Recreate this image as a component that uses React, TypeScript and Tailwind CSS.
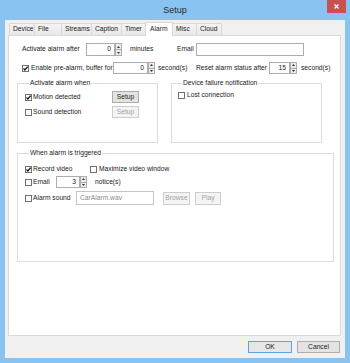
import React from 'react';

const font = "font-['Liberation_Sans',Arial,sans-serif]";

function Check({ checked = false }: { checked?: boolean }) {
  return (
    <span className="flex h-[7px] w-[7px] shrink-0 items-center justify-center border border-[#707070] bg-white">
      {checked && (
        <svg width="5" height="5" viewBox="0 0 5 5" className="shrink-0">
          <path d="M0.5 2.5 1.9 4 4.6 0.7" fill="none" stroke="#111" strokeWidth="1.2" />
        </svg>
      )}
    </span>
  );
}

function Tri({ up }: { up?: boolean }) {
  return (
    <svg width="3" height="2" viewBox="0 0 3 2">
      <path d={up ? 'M0 2 1.5 0 3 2Z' : 'M0 0 1.5 2 3 0Z'} fill="#333" />
    </svg>
  );
}

function Spin({ value, w }: { value: string; w: string }) {
  return (
    <div className="flex h-full shrink-0">
      <div className={`${w} flex h-full items-center justify-end border border-[#abadb3] bg-white pr-[3px]`}>
        {value}
      </div>
      <div className="flex h-full w-[7px] flex-col">
        <span className="flex flex-1 items-center justify-center border border-[#acacac] bg-[#ececec]">
          <Tri up />
        </span>
        <span className="-mt-px flex flex-1 items-center justify-center border border-[#acacac] bg-[#ececec]">
          <Tri />
        </span>
      </div>
    </div>
  );
}

function Btn({ label, w, disabled, primary }: { label: string; w: string; disabled?: boolean; primary?: boolean }) {
  const tone = disabled
    ? 'border-[#cccccc] bg-[#f4f4f4] text-[#a3a3a3]'
    : primary
      ? 'border-[#5fa2e0] bg-[#e6e6e6]'
      : 'border-[#adadad] bg-[#e3e3e3]';
  return (
    <div className={`${w} ${tone} flex h-full shrink-0 items-center justify-center border`}>{label}</div>
  );
}

const tabs = [
  { label: 'Device', w: 'w-[26px]' },
  { label: 'File', w: 'w-[27px]' },
  { label: 'Streams', w: 'w-[30px]' },
  { label: 'Caption', w: 'w-[30px]' },
  { label: 'Timer', w: 'w-[24px]' },
  { label: 'Alarm', w: 'w-[28px]', active: true },
  { label: 'Misc', w: 'w-[24px]' },
  { label: 'Cloud', w: 'w-[25px]' },
];

export default function App() {
  return (
    <div className={`${font} flex h-[363px] w-[350px] flex-col bg-[#88c3f2] text-[6.7px] leading-none text-[#1a1a1a]`}>
      {/* title bar */}
      <div className="relative flex h-[20px] shrink-0 items-center justify-center">
        <span className="text-[9px] text-[#2a2a2a]">Setup</span>
        <div className="absolute right-[4px] top-0 flex h-[13px] w-[19px] items-center justify-center bg-[#c75050]">
          <svg width="5" height="5" viewBox="0 0 5 5">
            <path d="M0.5 0.5 4.5 4.5M4.5 0.5 0.5 4.5" stroke="#fff" strokeWidth="1.2" />
          </svg>
        </div>
      </div>

      <div className="mx-[5px] mb-[5px] flex flex-1 flex-col bg-[#f0f0f0]">
        {/* tabs */}
        <div className="ml-[4px] mt-[3px] flex h-[12px] shrink-0">
          {tabs.map((t, i) =>
            t.active ? (
              <div
                key={t.label}
                className={`${t.w} relative -top-[1px] z-10 -ml-px flex h-[14px] items-center border border-b-0 border-[#d9d9d9] bg-white pl-[4px]`}
              >
                {t.label}
              </div>
            ) : (
              <div
                key={t.label}
                className={`${t.w} flex h-full items-center border-r border-t border-[#d9d9d9] bg-linear-to-b from-[#f4f4f4] to-[#e8e8e8] pl-[3px] ${i === 0 ? 'border-l' : ''}`}
              >
                {t.label}
              </div>
            ),
          )}
        </div>

        {/* panel */}
        <div className="ml-[3px] flex h-[301px] w-[333px] shrink-0 flex-col border border-[#d9d9d9] bg-white pl-[8px]">
          <div className="ml-[5px] mt-[7px] flex h-[13px] items-center">
            <span className="w-[64px]">Activate alarm after</span>
            <Spin value="0" w="w-[29px]" />
            <span className="ml-[8px] w-[47px]">minutes</span>
            <span className="w-[19px]">Email</span>
            <div className="h-full w-[108px] border border-[#abadb3] bg-white" />
          </div>

          <div className="ml-[5px] mt-[6px] flex h-[12px] items-center">
            <Check checked />
            <span className="ml-[2px] w-[82px]">Enable pre-alarm, buffer for</span>
            <Spin value="0" w="w-[35px]" />
            <span className="ml-[3px] w-[38px]">second(s)</span>
            <span className="w-[73px]">Reset alarm status after</span>
            <Spin value="15" w="w-[21px]" />
            <span className="ml-[4px]">second(s)</span>
          </div>

          <div className="mt-[5px] flex gap-[13px]">
            <fieldset className="h-[64px] w-[141px] border border-[#dcdcdc] pl-[7px]">
              <legend className="ml-[4px] h-[8px] px-[1px] leading-[8px]">Activate alarm when</legend>
              <div className="mt-[4px] flex h-[12px] items-center">
                <Check checked />
                <span className="ml-[1px] w-[79px]">Motion detected</span>
                <Btn label="Setup" w="w-[27px]" />
              </div>
              <div className="mt-[3px] flex h-[12px] items-center">
                <Check />
                <span className="ml-[1px] w-[79px]">Sound detection</span>
                <Btn label="Setup" w="w-[27px]" disabled />
              </div>
            </fieldset>
            <fieldset className="h-[64px] w-[151px] border border-[#dcdcdc] pl-[6px]">
              <legend className="ml-[4px] h-[8px] px-[1px] leading-[8px]">Device failure notification</legend>
              <div className="mt-[2px] flex h-[12px] items-center">
                <Check />
                <span className="ml-[2px]">Lost connection</span>
              </div>
            </fieldset>
          </div>

          <fieldset className="mt-[6px] h-[113px] w-[317px] border border-[#dcdcdc] pl-[7px]">
            <legend className="ml-[4px] h-[8px] px-[1px] leading-[8px]">When alarm is triggered</legend>
            <div className="mt-[6px] flex h-[12px] items-center">
              <Check checked />
              <span className="ml-[1px] w-[57px]">Record video</span>
              <Check />
              <span className="ml-[2px]">Maximize video window</span>
            </div>
            <div className="mt-[1px] flex h-[12px] items-center">
              <Check />
              <span className="ml-[1px] w-[23px]">Email</span>
              <Spin value="3" w="w-[24px]" />
              <span className="ml-[8px]">notice(s)</span>
            </div>
            <div className="mt-[3px] flex h-[14px] items-center">
              <Check />
              <span className="ml-[1px] w-[43px]">Alarm sound</span>
              <div className="flex h-full w-[78px] items-center border border-[#c5c5c5] bg-white pl-[3px] text-[#8a8a8a]">
                CarAlarm.wav
              </div>
              <div className="ml-[9px] h-[13px]">
                <Btn label="Browse" w="w-[27px]" disabled />
              </div>
              <div className="ml-[5px] h-[13px]">
                <Btn label="Play" w="w-[26px]" disabled />
              </div>
            </div>
          </fieldset>
        </div>

        {/* dialog buttons */}
        <div className="mt-[5px] flex h-[12px] shrink-0 justify-end gap-[5px] pr-[5px]">
          <Btn label="OK" w="w-[44px]" primary />
          <Btn label="Cancel" w="w-[43px]" />
        </div>
      </div>
    </div>
  );
}
